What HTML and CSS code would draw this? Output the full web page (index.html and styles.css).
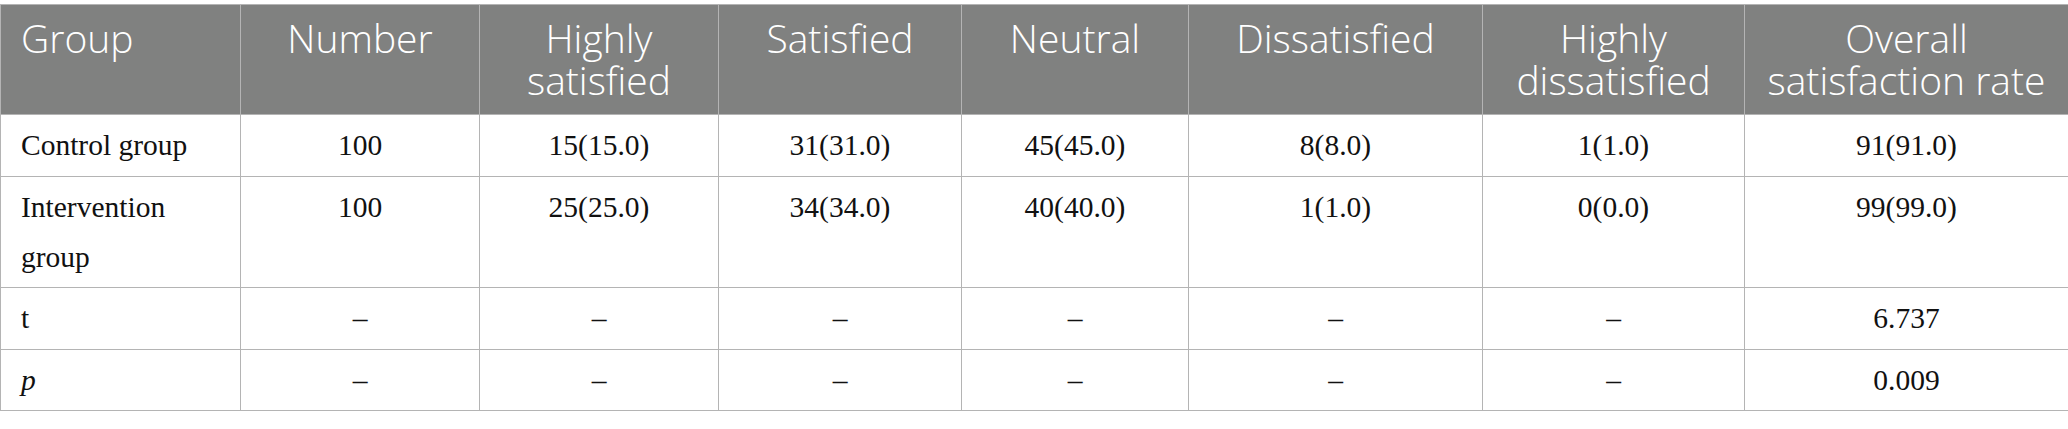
FILE: index.html
```html
<!DOCTYPE html>
<html lang="en">
<head>
<meta charset="utf-8">
<title>Satisfaction table</title>
<link rel="stylesheet" href="styles.css">
</head>
<body>
<table class="data-table">
  <colgroup>
    <col class="c1"><col class="c2"><col class="c3"><col class="c4"><col class="c5"><col class="c6"><col class="c7"><col class="c8">
  </colgroup>
  <thead>
    <tr>
      <th class="first">Group</th>
      <th>Number</th>
      <th>Highly<br>satisfied</th>
      <th>Satisfied</th>
      <th>Neutral</th>
      <th>Dissatisfied</th>
      <th>Highly<br>dissatisfied</th>
      <th>Overall<br>satisfaction rate</th>
    </tr>
  </thead>
  <tbody>
    <tr>
      <td class="first">Control group</td>
      <td>100</td><td>15(15.0)</td><td>31(31.0)</td><td>45(45.0)</td><td>8(8.0)</td><td>1(1.0)</td><td>91(91.0)</td>
    </tr>
    <tr>
      <td class="first">Intervention<br>group</td>
      <td>100</td><td>25(25.0)</td><td>34(34.0)</td><td>40(40.0)</td><td>1(1.0)</td><td>0(0.0)</td><td>99(99.0)</td>
    </tr>
    <tr>
      <td class="first">t</td>
      <td>–</td><td>–</td><td>–</td><td>–</td><td>–</td><td>–</td><td>6.737</td>
    </tr>
    <tr>
      <td class="first"><i>p</i></td>
      <td>–</td><td>–</td><td>–</td><td>–</td><td>–</td><td>–</td><td>0.009</td>
    </tr>
  </tbody>
</table>
</body>
</html>
```
FILE: styles.css
```css
html, body {
  margin: 0;
  padding: 0;
  background: #ffffff;
}

.data-table {
  margin-top: 4px;
  width: 2068px;
  table-layout: fixed;
  border-collapse: collapse;
}

.c1 { width: 240px; }
.c2 { width: 239px; }
.c3 { width: 239px; }
.c4 { width: 243px; }
.c5 { width: 227px; }
.c6 { width: 294px; }
.c7 { width: 262px; }
.c8 { width: 324px; }

.data-table th,
.data-table td {
  border: 1px solid #b4b4b4;
  vertical-align: top;
  text-align: center;
}

.data-table th {
  background: #808180;
  color: #ffffff;
  font-family: "Open Sans", "Noto Sans", sans-serif;
  font-weight: 300;
  font-size: 39px;
  line-height: 42px;
  padding: 12px 8px 13px;
}

.data-table td {
  color: #111111;
  font-family: "Liberation Serif", serif;
  font-size: 29.5px;
  line-height: 50px;
  padding: 5px 8px 5.5px;
}

.data-table .first {
  text-align: left;
  padding-left: 20px;
}
```
